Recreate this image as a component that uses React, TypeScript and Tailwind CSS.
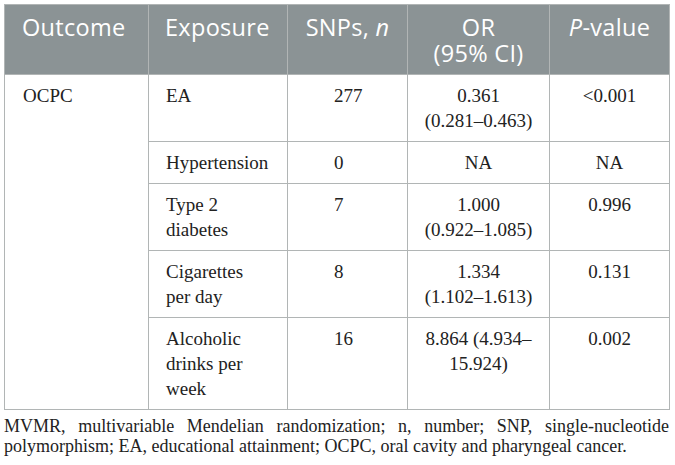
import React from "react";

type Row = {
  exposure: string[];
  snps: string;
  or: string[];
  p: string;
};

const rows: Row[] = [
  { exposure: ["EA"], snps: "277", or: ["0.361", "(0.281–0.463)"], p: "<0.001" },
  { exposure: ["Hypertension"], snps: "0", or: ["NA"], p: "NA" },
  { exposure: ["Type 2", "diabetes"], snps: "7", or: ["1.000", "(0.922–1.085)"], p: "0.996" },
  { exposure: ["Cigarettes", "per day"], snps: "8", or: ["1.334", "(1.102–1.613)"], p: "0.131" },
  { exposure: ["Alcoholic", "drinks per", "week"], snps: "16", or: ["8.864 (4.934–", "15.924)"], p: "0.002" },
];

function Lines(props: { items: string[] }) {
  return (
    <>
      {props.items.map((t, i) => (
        <React.Fragment key={i}>
          {i > 0 && <br />}
          {t}
        </React.Fragment>
      ))}
    </>
  );
}

const th =
  "border border-[#b1b5b5] align-top pt-[9px] pb-[8px] font-normal text-white leading-[26px]";
const td = "border border-[#b1b5b5] align-top pt-[8px] pb-[8px] leading-[25px]";

export default function App() {
  return (
    <div className="min-h-screen bg-white p-1 text-[#222]">
      <table className="w-[665px] table-fixed border-collapse font-['Liberation_Serif',serif] text-[19px]">
        <colgroup>
          <col className="w-[144px]" />
          <col className="w-[139px]" />
          <col className="w-[120px]" />
          <col className="w-[142px]" />
          <col className="w-[120px]" />
        </colgroup>
        <thead className="bg-[#8b9395] font-['Open_Sans',sans-serif] text-[23.5px] tracking-[0.3px]">
          <tr>
            <th className={`${th} pl-[17px] text-left`}>Outcome</th>
            <th className={`${th} pl-[16px] text-left`}>Exposure</th>
            <th className={`${th} text-center`}>
              SNPs, <i>n</i>
            </th>
            <th className={`${th} text-center`}>
              OR
              <br />
              (95% CI)
            </th>
            <th className={`${th} text-center`}>
              <i>P</i>-value
            </th>
          </tr>
        </thead>
        <tbody>
          {rows.map((r, i) => (
            <tr key={i}>
              {i === 0 && (
                <td rowSpan={rows.length} className={`${td} pl-[18px]`}>
                  OCPC
                </td>
              )}
              <td className={`${td} pl-[17px] pr-[17px]`}>
                <Lines items={r.exposure} />
              </td>
              <td className={`${td} pl-[46px]`}>{r.snps}</td>
              <td className={`${td} text-center`}>
                <Lines items={r.or} />
              </td>
              <td className={`${td} text-center`}>{r.p}</td>
            </tr>
          ))}
        </tbody>
      </table>
      <div className="mt-[6px] w-[665px] font-['Liberation_Serif',serif] text-[18px] leading-[20px]">
        <p className="text-justify [text-align-last:justify]">
          MVMR, multivariable Mendelian randomization; n, number; SNP, single-nucleotide
        </p>
        <p>polymorphism; EA, educational attainment; OCPC, oral cavity and pharyngeal cancer.</p>
      </div>
    </div>
  );
}
